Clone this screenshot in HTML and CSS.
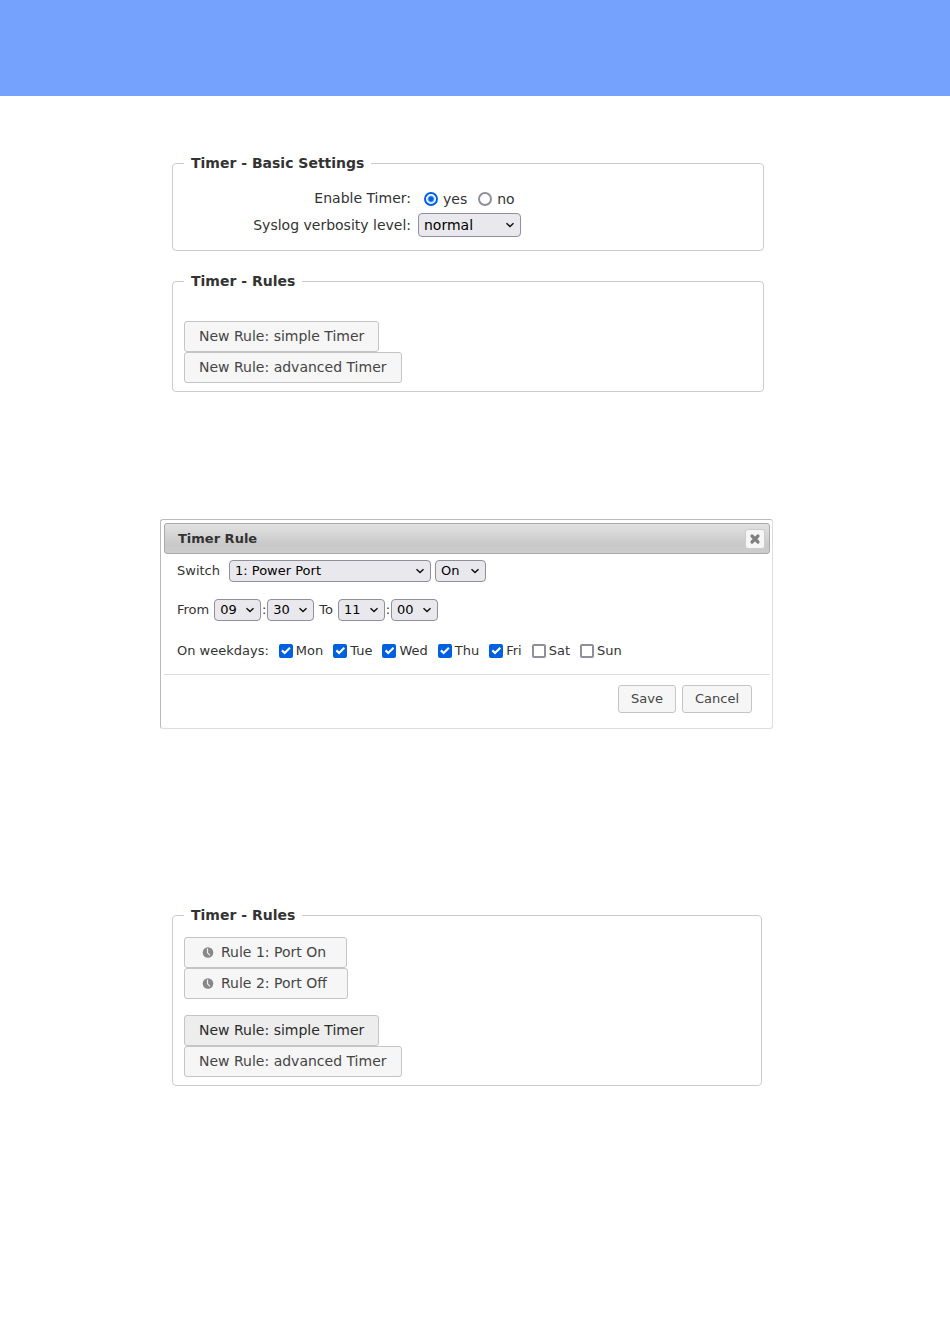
FILE: index.html
```html
<!DOCTYPE html>
<html lang="en">
<head>
<meta charset="utf-8">
<title>Timer</title>
<link rel="stylesheet" href="styles.css">
</head>
<body>
<svg class="defs" aria-hidden="true">
  <symbol id="chevron" viewBox="0 0 10 8"><path d="M1.500 2.200 5 5.500 8.500 2.200" fill="none" stroke="currentColor" stroke-width="1.500"/></symbol>
  <symbol id="clock" viewBox="0 0 12 12"><circle cx="6" cy="5.500" r="5.300" fill="#888"/><path d="M5.500 1.500v4.300l2.500 2.500" fill="none" stroke="#eee" stroke-width="1.200"/></symbol>
</svg>
<header class="banner"></header>
<main class="page">
  <fieldset class="group">
    <legend>Timer - Basic Settings</legend>
    <div class="settings">
      <span class="name" id="enable">Enable Timer:</span>
      <div class="radios" role="radiogroup" aria-labelledby="enable">
        <label><input type="radio" name="timer" checked>yes</label>
        <label><input type="radio" name="timer">no</label>
      </div>
      <label class="name" for="level">Syslog verbosity level:</label>
      <span class="drop level"><select id="level"><option>normal</option></select><svg><use href="#chevron"/></svg></span>
    </div>
  </fieldset>

  <fieldset class="group rules">
    <legend>Timer - Rules</legend>
    <div class="stack first">
      <button class="btn" type="button">New Rule: simple Timer</button>
      <button class="btn" type="button">New Rule: advanced Timer</button>
    </div>
  </fieldset>

  <section class="dialog" role="dialog" aria-labelledby="dialog-title">
    <div class="titlebar">
      <h2 id="dialog-title">Timer Rule</h2>
      <button class="close" type="button" aria-label="Close"><svg viewBox="0 0 12 12"><path d="M3 3l6 6m0-6-6 6" fill="none" stroke="#808080" stroke-width="3.200" stroke-linecap="round"/></svg></button>
    </div>
    <div class="form">
      <div class="line">
        <label class="switch" for="port">Switch</label>
        <span class="drop port"><select id="port"><option>1: Power Port</option></select><svg><use href="#chevron"/></svg></span>
        <span class="drop state"><select aria-label="State"><option>On</option></select><svg><use href="#chevron"/></svg></span>
      </div>
      <div class="line times">
        <label for="from-hour">From</label>
        <span class="time">
          <span class="drop"><select id="from-hour"><option>09</option></select><svg><use href="#chevron"/></svg></span><span class="colon">:</span><span class="drop"><select aria-label="From minute"><option>30</option></select><svg><use href="#chevron"/></svg></span>
        </span>
        <label for="to-hour">To</label>
        <span class="time">
          <span class="drop"><select id="to-hour"><option>11</option></select><svg><use href="#chevron"/></svg></span><span class="colon">:</span><span class="drop"><select aria-label="To minute"><option>00</option></select><svg><use href="#chevron"/></svg></span>
        </span>
      </div>
      <div class="line days">
        <span>On weekdays:</span>
        <label><input type="checkbox" checked>Mon</label>
        <label><input type="checkbox" checked>Tue</label>
        <label><input type="checkbox" checked>Wed</label>
        <label><input type="checkbox" checked>Thu</label>
        <label><input type="checkbox" checked>Fri</label>
        <label><input type="checkbox">Sat</label>
        <label><input type="checkbox">Sun</label>
      </div>
    </div>
    <div class="actions">
      <button class="btn small" type="button">Save</button>
      <button class="btn small" type="button">Cancel</button>
    </div>
  </section>

  <fieldset class="group saved">
    <legend>Timer - Rules</legend>
    <div class="stack">
      <button class="btn rule" type="button"><svg><use href="#clock"/></svg>Rule 1: Port On</button>
      <button class="btn rule" type="button"><svg><use href="#clock"/></svg>Rule 2: Port Off</button>
    </div>
    <div class="stack next">
      <button class="btn hover" type="button">New Rule: simple Timer</button>
      <button class="btn" type="button">New Rule: advanced Timer</button>
    </div>
  </fieldset>
</main>
</body>
</html>
```
FILE: styles.css
```css
* { box-sizing: border-box; }
body {
  margin: 0;
  background: #fff;
  color: #333;
  font: 14px/20px Verdana, "DejaVu Sans", sans-serif;
}
.defs { position: absolute; width: 0; height: 0; }
.banner { height: 96px; background: #74a2fd; }
.page { padding: 57px 186px 48px 172px; }

.group {
  min-width: 0;
  margin: 0;
  padding: 0 11px 10px;
  border: 1px solid #ccc;
  border-radius: 4px;
}
.group legend { padding: 0 7px; font-weight: bold; }
.settings {
  display: grid;
  grid-template-columns: 227px 1fr;
  column-gap: 7px;
  row-gap: 4px;
  align-items: start;
  padding: 15px 0 3px;
}
.name { text-align: right; }
.settings label.name { padding-top: 2px; }
.radios { display: flex; gap: 11px; padding: 1px 0 0 6px; }
.radios label { display: flex; align-items: center; gap: 5px; }
input { appearance: none; flex: none; margin: 0; border: 2px solid #8f8f9d; background: #fff; }
input[type="radio"] { width: 14px; height: 14px; border-radius: 50%; }
input[type="radio"]:checked {
  border-color: #0061e0;
  background: radial-gradient(circle, #0061e0 2px, #fff 4px);
}
input[type="checkbox"] { width: 14px; height: 14px; border-radius: 2px; }
input[type="checkbox"]:checked { border-color: #0061e0; background: #0061e0; }
input[type="checkbox"]:checked::before {
  content: "";
  display: block;
  height: 10px;
  background: #fff;
  clip-path: polygon(4% 52%, 18% 36%, 38% 56%, 84% 10%, 98% 24%, 38% 86%);
}

.drop { position: relative; display: inline-flex; }
.drop select {
  appearance: none;
  width: 100%;
  height: 22px;
  padding: 0 5px;
  border: 1px solid #8f8f9d;
  border-radius: 4px;
  background: #e9e9ed;
  color: #000;
  font: inherit;
  line-height: 18px;
}
.drop svg {
  position: absolute;
  right: 6px;
  top: 50%;
  width: 10px;
  height: 8px;
  margin-top: -4px;
  color: #111;
  pointer-events: none;
}
.level { width: 103px; }
.level select { height: 24px; }

.rules { margin-top: 20px; }
.stack { display: flex; flex-direction: column; align-items: flex-start; }
.stack.first { padding-top: 30px; }
.stack.next { padding-top: 16px; }
.rules { padding-bottom: 8px; }
.btn {
  display: inline-flex;
  align-items: center;
  padding: 4px 14px;
  border: 1px solid #c5c5c5;
  border-radius: 3px;
  background: #f6f6f6;
  color: #454545;
  font: inherit;
  line-height: 21px;
}
.btn svg { width: 12px; height: 12px; margin: 0 7px 0 3px; }
.btn.rule { padding-right: 20px; }
.btn.hover { background: #ededed; color: #2b2b2b; }
.btn.small { line-height: 18px; padding: 4px 12px; }

.dialog {
  margin: 127px -9px 0 -12px;
  padding: 3px 2px 3px 3px;
  border: 1px solid #ddd;
  border-color: #bbb #ddd #ddd #bbb;
  border-radius: 3px;
  font-size: 13px;
}
.titlebar {
  display: flex;
  align-items: center;
  justify-content: space-between;
  padding: 5px 4px 4px 13px;
  border: 1px solid #aaa;
  border-radius: 3px;
  background: linear-gradient(#e2e2e2, #c9c9c9 70%, #ccc);
}
.titlebar h2 { margin: 0; font-size: 13px; line-height: 20px; }
.close {
  display: grid;
  place-items: center;
  width: 20px;
  height: 20px;
  padding: 0;
  border: 1px solid #ccc;
  border-radius: 3px;
  background: #f6f6f6;
}
.close svg { width: 12px; height: 12px; }
.form { display: grid; gap: 17px; padding: 6px 13px 12px; }
.line { display: flex; align-items: center; gap: 4px; min-height: 22px; }
.switch { margin-right: 5px; }
.port { width: 202px; }
.state { width: 51px; }
.times { gap: 5px; }
.time { display: flex; align-items: center; }
.time .drop { width: 47px; }
.colon { width: 6px; text-align: center; }
.days { gap: 10px; min-height: 24px; padding-top: 2px; }
.days label { display: flex; align-items: center; gap: 3px; }
.actions {
  display: flex;
  justify-content: flex-end;
  gap: 6px;
  padding: 10px 18px 12px;
  border-top: 1px solid #ddd;
}
.saved { margin: 176px 2px 0 0; padding-bottom: 8px; }
.saved .stack:first-of-type { padding-top: 12px; }
```
